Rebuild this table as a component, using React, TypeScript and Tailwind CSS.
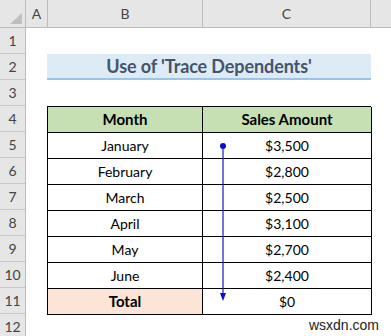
import React from "react";

const rows = [
  ["January", "$3,500"],
  ["February", "$2,800"],
  ["March", "$2,500"],
  ["April", "$3,100"],
  ["May", "$2,700"],
  ["June", "$2,400"],
];

export default function App() {
  const rowNums = [1, 2, 3, 4, 5, 6, 7, 8, 9, 10, 11, 12];
  return (
    <div
      className="relative w-[391px] h-[336px] overflow-hidden bg-white text-[#000]"
      style={{ fontFamily: "Lato, 'Noto Sans', sans-serif" }}
    >
      {/* column header bar */}
      <div className="flex h-[28px] bg-[#e6e6e6] border-b border-[#bcbcbc] text-[14px] text-[#444]">
        <div className="relative w-[26px] border-r border-[#bcbcbc] shrink-0">
          <svg className="absolute right-[3px] bottom-[3px]" width="12" height="11" viewBox="0 0 12 11">
            <polygon points="12,0 12,11 0,11" fill="#bfbfbf" />
          </svg>
        </div>
        <div className="w-[22px] border-r border-[#bcbcbc] flex items-center justify-center shrink-0">A</div>
        <div className="w-[155px] border-r border-[#bcbcbc] flex items-center justify-center shrink-0">B</div>
        <div className="w-[168px] border-r border-[#bcbcbc] flex items-center justify-center shrink-0">C</div>
        <div className="flex-1" />
      </div>

      <div className="flex">
        {/* row numbers */}
        <div className="w-[26px] shrink-0 bg-[#e6e6e6] border-r border-[#bcbcbc] text-[14px] text-[#444]">
          {rowNums.map((n) => (
            <div key={n} className="h-[26px] border-b border-[#c8c8c8] flex items-center justify-center">
              {n}
            </div>
          ))}
        </div>

        {/* sheet content */}
        <div className="relative flex-1 pl-[21px]">
          <div className="h-[26px]" />
          <div className="h-[26px] w-[324px] bg-[#ddebf7] border-b-2 border-[#9dc3e6] flex items-center justify-center text-[#44546a] font-bold text-[18px] tracking-[-0.1px]">
            Use of 'Trace Dependents'
          </div>
          <div className="h-[26px]" />

          <div className="w-[324px] border-t border-l border-black text-[14px]">
            <div className="grid grid-cols-[155px_169px] h-[26px] bg-[#c6e0b4] font-bold text-[15px]">
              <div className="border-r border-b border-black flex items-center justify-center">Month</div>
              <div className="border-r border-b border-black flex items-center justify-center">Sales Amount</div>
            </div>
            {rows.map(([m, v]) => (
              <div key={m} className="grid grid-cols-[155px_169px] h-[26px]">
                <div className="border-r border-b border-black flex items-center justify-center">{m}</div>
                <div className="border-r border-b border-black flex items-center justify-center">{v}</div>
              </div>
            ))}
            <div className="grid grid-cols-[155px_169px] h-[26px]">
              <div className="bg-[#fce4d6] border-r border-b border-black flex items-center justify-center font-bold text-[15px]">Total</div>
              <div className="border-r border-b border-black flex items-center justify-center">$0</div>
            </div>
          </div>

          {/* tracer arrow */}
          <svg
            className="absolute left-[192px] top-[112px]"
            width="12"
            height="164"
            viewBox="0 0 12 164"
          >
            <circle cx="5" cy="6" r="3" fill="#0a0ad0" />
            <line x1="5" y1="6" x2="5" y2="156" stroke="#1a1ab8" strokeWidth="1.2" />
            <polygon points="2,153 8,153 5,161" fill="#0a0ad0" />
          </svg>

          <div
            className="absolute right-[12px] top-[287px] text-[14px] text-[#222]"
            style={{ fontFamily: "'Liberation Sans', Arial, sans-serif" }}
          >
            wsxdn.com
          </div>
        </div>
      </div>
    </div>
  );
}
